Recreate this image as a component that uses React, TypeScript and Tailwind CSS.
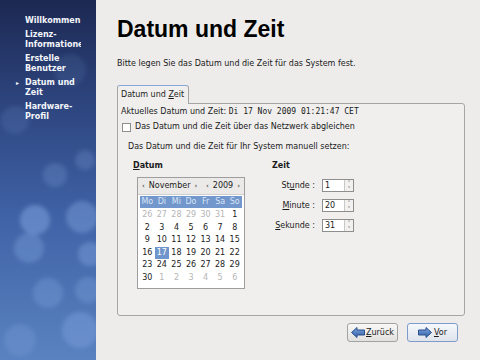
import React from 'react';

const steps = [
  { lines: ['Willkommen'], active: false },
  { lines: ['Lizenz-', 'Informationen'], active: false },
  { lines: ['Erstelle', 'Benutzer'], active: false },
  { lines: ['Datum und', 'Zeit'], active: true },
  { lines: ['Hardware-', 'Profil'], active: false },
];

const weekdays = ['Mo', 'Di', 'Mi', 'Do', 'Fr', 'Sa', 'So'];

// 6 rows of november 2009, leading/trailing days from other months are greyed
const days: { d: number; other: boolean }[] = [
  ...[26, 27, 28, 29, 30, 31].map((d) => ({ d, other: true })),
  ...Array.from({ length: 30 }, (_, i) => ({ d: i + 1, other: false })),
  ...[1, 2, 3, 4, 5, 6].map((d) => ({ d, other: true })),
];

const SidebarBackground: React.FC = () => (
  <svg className="absolute inset-0" width="96" height="360" viewBox="0 0 96 360">
    <defs>
      <linearGradient id="sb" x1="0" y1="0" x2="0" y2="1">
        <stop offset="0" stopColor="#1c2852" />
        <stop offset="0.3" stopColor="#2e4680" />
        <stop offset="0.6" stopColor="#3f62a6" />
        <stop offset="1" stopColor="#5a82c0" />
      </linearGradient>
      <filter id="blur" x="-50%" y="-50%" width="200%" height="200%">
        <feGaussianBlur stdDeviation="2" />
      </filter>
    </defs>
    <rect width="96" height="360" fill="url(#sb)" />
    <g filter="url(#blur)" fill="#7ea2dc">
      <circle cx="35" cy="220" r="15" opacity="0.55" />
      <circle cx="29" cy="248" r="15" opacity="0.4" />
      <circle cx="82" cy="217" r="16" opacity="0.45" />
      <circle cx="90" cy="254" r="12" opacity="0.45" />
      <circle cx="48" cy="293" r="15" opacity="0.35" />
      <circle cx="88" cy="290" r="13" opacity="0.35" />
      <circle cx="80" cy="330" r="18" opacity="0.45" />
      <circle cx="20" cy="340" r="16" opacity="0.3" />
      <circle cx="55" cy="175" r="12" opacity="0.25" />
      <circle cx="85" cy="160" r="10" opacity="0.25" />
      <circle cx="15" cy="120" r="14" opacity="0.15" />
      <circle cx="70" cy="70" r="16" opacity="0.12" />
    </g>
  </svg>
);

const ArrowIcon: React.FC<{ dir: 'left' | 'right' }> = ({ dir }) => (
  <svg width="14" height="11" viewBox="0 0 14 11" className={dir === 'left' ? '' : '-scale-x-100'}>
    <defs>
      <linearGradient id={`ar-${dir}`} x1="0" y1="0" x2="0" y2="1">
        <stop offset="0" stopColor="#7fa6dc" />
        <stop offset="1" stopColor="#2f5fa8" />
      </linearGradient>
    </defs>
    <path d="M0.5 5.5 L6 0.5 L6 3 L13.5 3 L13.5 8 L6 8 L6 10.5 Z" fill={`url(#ar-${dir})`} stroke="#284f8e" strokeWidth="1" strokeLinejoin="round" />
  </svg>
);

const SpinBox: React.FC<{ label: React.ReactNode; value: string }> = ({ label, value }) => (
  <div className="flex items-center h-[13px]">
    <span className="w-[43px] text-right">{label}</span>
    <div className="ml-[7px] w-[32px] h-[13px] flex bg-white border border-[#8e8e8e]">
      <span className="flex-1 pl-[2px] leading-[11px]">{value}</span>
      <div className="w-[9px] flex flex-col border-l border-[#c8c8c8] bg-[#f2f1f0] text-[#555] text-[6px] leading-[5px] items-center">
        <span className="h-[5.5px]">˄</span>
        <span className="h-[5.5px]">˅</span>
      </div>
    </div>
  </div>
);

const App: React.FC = () => {
  return (
    <div className="w-[480px] h-[360px] flex bg-[#edeceb] text-[#1a1a1a] font-['DejaVu_Sans',sans-serif] text-[8px] overflow-hidden">
      {/* Sidebar */}
      <div className="relative w-[96px] h-full overflow-hidden">
        <SidebarBackground />
        <div className="relative pt-[16px] pl-[16px] flex flex-col gap-[4px]">
          {steps.map((s) => (
            <div key={s.lines[0]} className="flex text-[#f4f6fa] font-bold leading-[10px]">
              <span className="w-[9px] text-[6px] leading-[10px]">{s.active ? '▸' : ''}</span>
              <div className="w-[56px] overflow-hidden whitespace-nowrap">
                {s.lines.map((l) => (
                  <div key={l}>{l}</div>
                ))}
              </div>
            </div>
          ))}
        </div>
      </div>

      {/* Main */}
      <div className="flex-1 flex flex-col pl-[21px] pr-[15px]">
        <h1 className="pt-[16px] text-[23px] leading-[26px] font-bold font-['Liberation_Sans',sans-serif] text-black">
          Datum und Zeit
        </h1>
        <p className="mt-[16px] leading-[12px]">
          Bitte legen Sie das Datum und die Zeit für das System fest.
        </p>

        <div className="mt-[15px] flex flex-col">
          <div className="flex">
            <div className="relative z-10 -mb-px h-[19px] w-[72px] px-[3px] pt-[3px] leading-[12px] bg-[#f0efee] border border-b-0 border-[#a5a5a5] border-t-[#8aa8d6] rounded-t-[3px]">
              Datum und <span className="underline">Z</span>eit
            </div>
          </div>
          <div className="h-[213px] bg-[#f0efee] border border-[#a5a5a5] rounded-b-[3px] rounded-tr-[3px] pl-[3px] pt-[2px]">
            <div className="leading-[12px]">
              Aktuelles Datum und Zeit:{' '}
              <span className="font-['DejaVu_Sans_Mono',monospace]">Di 17 Nov 2009 01:21:47 CET</span>
            </div>
            <div className="mt-[3px] h-[12px] flex items-center pl-[1px]">
              <span className="w-[9px] h-[9px] bg-white border border-[#8e8e8e]" />
              <span className="ml-[4px]">Das Datum und die Zeit über das Netzwerk abgleichen</span>
            </div>
            <div className="mt-[8px] pl-[7px] leading-[12px]">
              Das Datum und die Zeit für Ihr System manuell setzen:
            </div>

            <div className="mt-[7px] flex pl-[12px]">
              {/* Datum */}
              <div className="w-[139px]">
                <div className="font-bold leading-[12px]">
                  <span className="underline">D</span>atum
                </div>
                <div className="mt-[5px] ml-[4px] w-[108px] h-[112px] border border-[#9e9e9e] bg-white flex flex-col">
                  <div className="h-[17px] bg-[#ebeae8] border-b border-[#d0cfcd] flex items-center justify-between px-[4px] leading-[12px]">
                    <span className="flex gap-[4px] items-center">
                      <span className="text-[7px]">‹</span>
                      <span>November</span>
                      <span className="text-[7px]">›</span>
                    </span>
                    <span className="flex gap-[4px] items-center">
                      <span className="text-[7px]">‹</span>
                      <span>2009</span>
                      <span className="text-[7px]">›</span>
                    </span>
                  </div>
                  <div className="px-[2px] pt-[1px]">
                    <div className="grid grid-cols-7 h-[12px] bg-[#7297cd] text-[#d9e4f4] leading-[12px] text-center">
                      {weekdays.map((w) => (
                        <span key={w}>{w}</span>
                      ))}
                    </div>
                    <div className="grid grid-cols-7 mt-[1px]">
                      {days.map((c, i) => (
                        <span
                          key={i}
                          className={
                            'h-[12.6px] leading-[12.6px] text-center ' +
                            (c.other
                              ? 'text-[#b5b5b5]'
                              : c.d === 17
                              ? 'bg-[#6f96cc] text-white'
                              : 'text-[#1a1a1a]')
                          }
                        >
                          {c.d}
                        </span>
                      ))}
                    </div>
                  </div>
                </div>
              </div>

              {/* Zeit */}
              <div>
                <div className="font-bold leading-[12px]">Zeit</div>
                <div className="mt-[7px] flex flex-col gap-[7px]">
                  <SpinBox label={<>St<span className="underline">u</span>nde :</>} value="1" />
                  <SpinBox label={<><span className="underline">M</span>inute :</>} value="20" />
                  <SpinBox label={<><span className="underline">S</span>ekunde :</>} value="31" />
                </div>
              </div>
            </div>
          </div>
        </div>

        <div className="mt-[7px] pr-[7px] flex justify-end gap-[9px]">
          <button className="w-[51px] h-[19px] flex items-center justify-center gap-[1px] rounded-[3px] border border-[#a2a2a2] bg-gradient-to-b from-[#f8f8f7] to-[#e2e1df]">
            <ArrowIcon dir="left" />
            <span>
              <span className="underline">Z</span>urück
            </span>
          </button>
          <button className="w-[51px] h-[19px] flex items-center justify-center gap-[2px] rounded-[3px] border border-[#7d9ccb] bg-gradient-to-b from-[#f6f8fb] to-[#dfe4ec]">
            <ArrowIcon dir="right" />
            <span>
              <span className="underline">V</span>or
            </span>
          </button>
        </div>
      </div>
    </div>
  );
};

export default App;
